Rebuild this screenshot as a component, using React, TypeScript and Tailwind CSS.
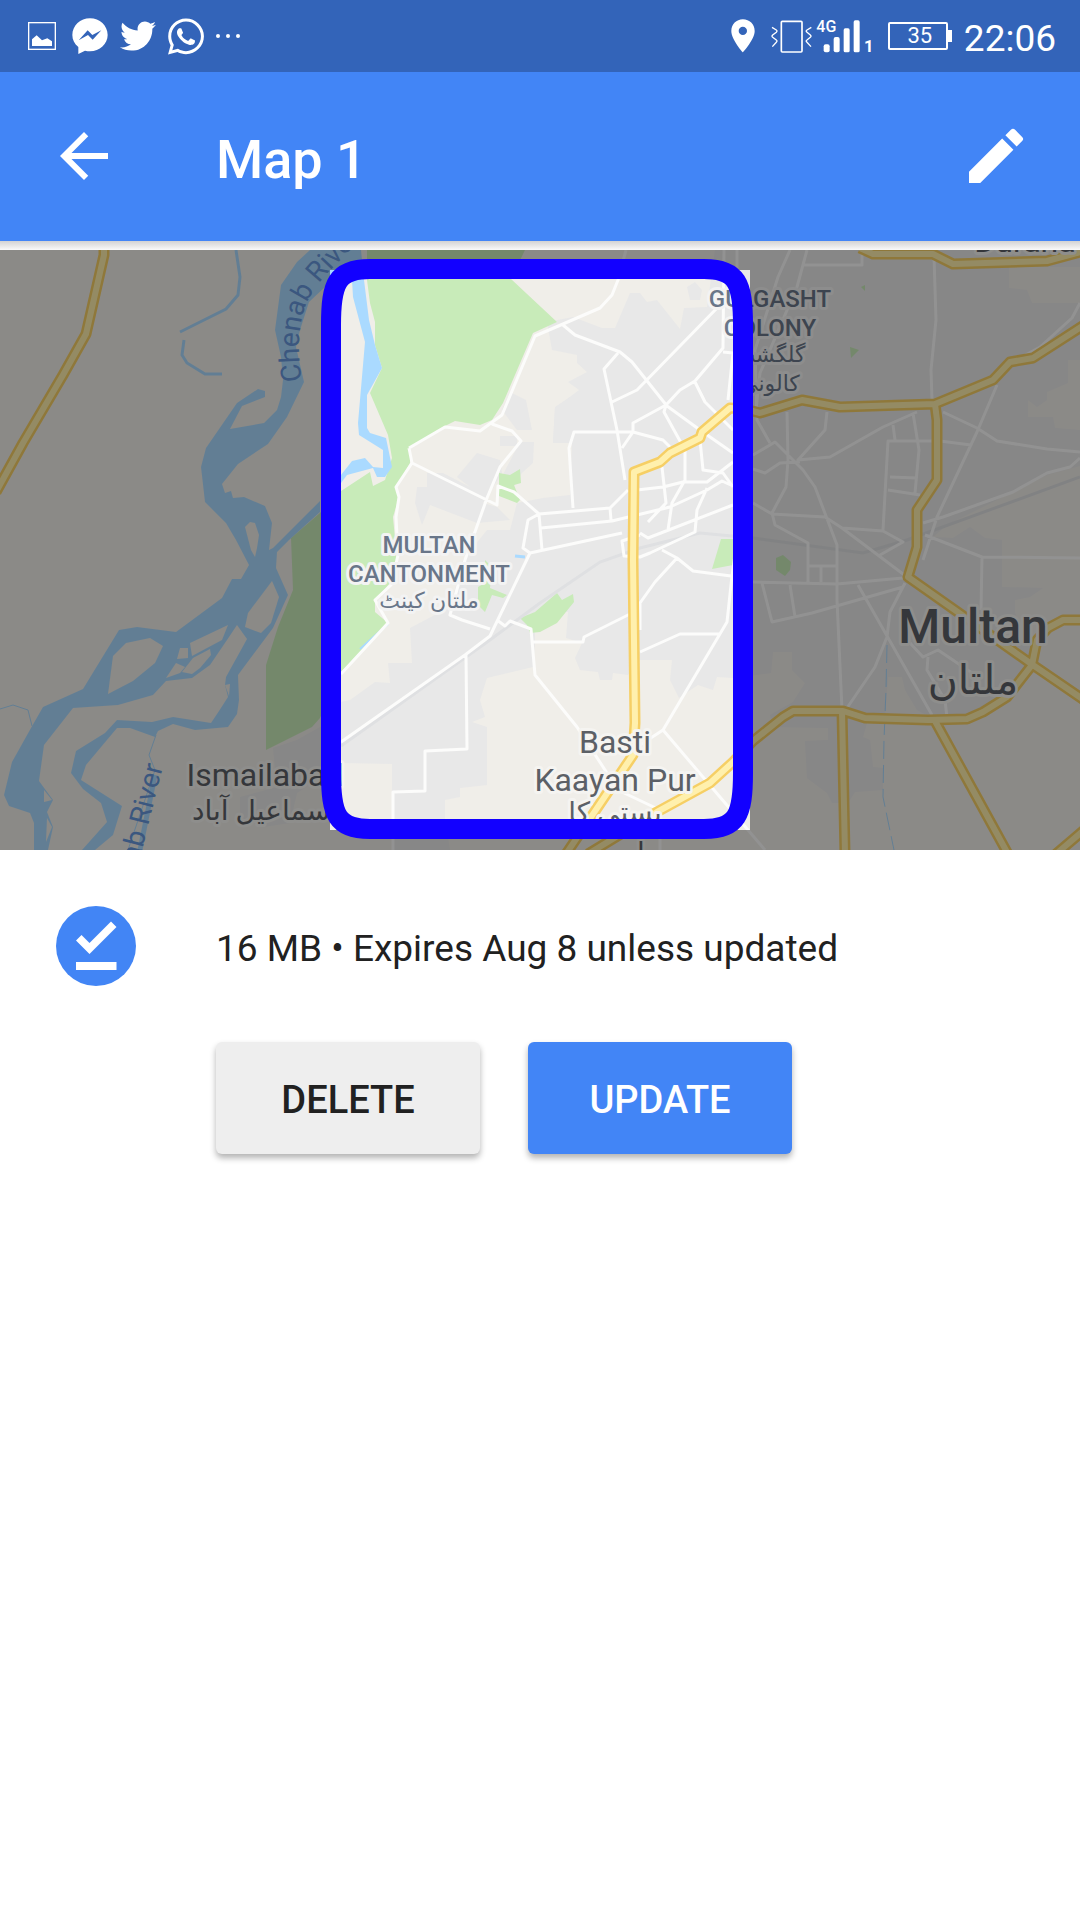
import { FaTwitter, FaWhatsapp } from "react-icons/fa";
import { MdArrowBack, MdEdit } from "react-icons/md";

const URBAN = [
  "547,322 573,317 602,328 615,328 630,293 640,293 647,302 657,300 680,329 684,308 707,307 715,250 1080,250 1080,267 1009,267 1009,288 1027,290 1032,303 1080,303 1080,360 1068,360 1068,383 1047,392 1047,400 1037,407 1028,400 1028,417 1053,417 1055,428 1080,430 1080,466 1047,475 947,525 933,537 953,538 970,527 985,538 1002,540 1002,587 1043,588 1030,597 1015,600 1015,613 1033,650 1033,663 1007,693 967,717 930,717 917,710 905,690 902,677 888,677 885,717 867,723 863,737 870,740 873,767 883,768 883,790 855,792 848,803 832,803 827,793 807,778 805,741 828,740 828,728 773,727 770,715 793,702 805,683 792,670 792,652 773,652 771,673 733,678 717,677 713,690 698,685 679,698 670,680 672,660 640,660 628,675 613,673 612,680 600,680 598,672 580,670 575,658 582,643 566,638 568,612 535,612 535,643 533,667 487,678 480,700 485,717 472,722 487,727 487,785 460,788 460,797 445,800 445,818 450,850 392,850 392,764 341,763 341,702 350,700 375,682 390,683 388,663 412,663 410,628 450,607 463,560 487,530 510,530 517,503 543,498 570,495 572,443 553,442 555,408 579,390 568,382 587,372 577,363 577,355 552,350",
  "510,392 526,400 532,430 517,430 502,410",
  "500,436 517,436 517,446 500,446",
  "555,407 570,397 570,443 553,443",
  "520,442 534,442 533,463 522,473 512,490 500,480",
  "477,453 500,460 502,473 483,503 497,507 510,520 477,523 443,510 430,505 422,525 415,503 417,487 427,487 427,473 443,473 470,487 457,477",
  "687,287 695,282 702,290 700,300 690,300",
  "273,748 297,740 320,727 341,720 341,765 297,793 290,823 263,827 240,817 240,797 277,787",
];

const PARKS = [
  "367,250 525,250 511,279 557,322 533,333 503,403 492,420 480,425 455,421 443,427 410,447 410,463 396,487 399,497 393,517 397,560 390,583 375,600 375,612 388,623 341,672 320,718 312,727 266,750 266,665 278,627 293,590 291,538 320,513 341,491 370,472 373,486 385,480 392,458 388,435 370,393 382,368 375,345 375,322 370,303 367,280",
  "499,473 510,475 520,469 521,483 514,485 520,500 517,503 499,496",
  "485,560 492,567 490,588 507,595 503,598 492,595 485,612 478,605 478,587 485,583",
  "520,618 535,612 557,593 562,600 573,594 574,602 557,623 540,632 530,633 527,625",
  "721,539 733,539 733,565 712,569",
  "850,347 859,350 851,358",
  "861,287 865,285 865,291",
  "776,558 783,555 791,562 790,570 785,576 776,570",
];

const RIVER =
  "361,250 310,250 297,262 281,285 275,330 281,357 283,380 281,397 277,410 264,423 230,429 242,406 265,397 265,391 258,389 237,403 206,448 201,467 205,502 226,523 236,540 249,565 241,579 232,579 222,598 176,632 137,627 119,630 83,689 43,707 31,728 12,762 4,795 9,806 30,813 34,823 34,850 48,850 53,827 47,812 53,800 39,781 44,745 73,708 118,705 153,695 166,681 192,678 210,665 227,640 237,625 247,639 226,677 225,685 228,697 219,711 211,723 173,717 152,722 117,720 105,733 76,751 71,773 83,789 101,803 107,822 82,850 95,850 113,835 122,806 81,780 86,765 117,728 130,728 155,737 158,731 173,724 195,730 228,727 237,714 239,700 238,675 273,628 288,595 276,568 277,552 289,540 320,512 320,501 273,548 269,550 272,523 265,506 244,497 233,498 231,491 225,493 222,484 238,464 268,444 287,417 304,382 296,347 300,330 309,302 325,287 340,276 352,280 353,297 365,342 358,423 359,435 383,450 383,468 373,467 365,458 352,461 341,475 341,483 347,475 373,468 377,477 385,477 392,467 386,438 370,433 367,428 367,395 382,368 375,345 369,320 364,280";

const ISLANDS = [
  "272,581 279,597 271,623 261,633 245,627 248,613",
  "245,527 250,522 255,523 259,535 257,548 255,557 251,550",
  "113,656 126,643 150,638 163,646 155,663 133,681 108,694",
  "190,643 228,625 222,640 192,656",
  "180,648 188,648 188,658 177,659",
  "176,663 185,667 180,673 166,678",
  "182,672 193,658 210,649 211,655 200,668 192,674",
  "225,685 230,684 229,696",
  "44,790 52,800 44,802",
  "47,818 52,827 46,842",
];

const STREETS =
  "M409 448L445 427 480 431 502 415 535 336 563 324 600 308 612 295 618 280 626 250" +
  "M409 448L412 463 396 487 399 497 396 517 398 555 391 585 375 600 388 623 341 674" +
  "M412 463L497 505 498 486 514 492 539 514 575 511 610 508 628 490" +
  "M492 424L512 431 521 441 500 467 487 498 465 560 450 615 462 620 490 629" +
  "M539 514L542 550M539 514L528 520 523 548 530 553M541 528L612 521 670 507 707 490 722 481 733 486" +
  "M530 553L622 533M530 553L490 636 465 655 341 742M466 655L467 749 425 751 425 791 393 792 393 852" +
  "M497 620L505 626 510 621 531 629 535 675 577 727 607 773 622 792 660 810 660 852" +
  "M533 642L583 642 584 637 632 613M563 325L575 335 620 352 632 362 667 406 700 430 733 453" +
  "M720 305L637 390 612 402M618 353L604 369 617 430 625 480M573 508L569 448 574 432 633 432 663 440 673 450" +
  "M633 432L633 423 666 405 680 390 695 381 723 348 724 250M737 250L737 290M695 382L705 402 733 430" +
  "M666 405L664 412 685 450 685 480 672 503 668 530M700 440L703 470 723 473 733 487" +
  "M733 462L707 482 683 482 663 487 637 490M662 467L666 503 648 522M633 432L622 448M610 508L611 520" +
  "M640 533L648 538 733 505M707 488L697 510 695 532 650 553 640 557 624 556 622 541 640 535" +
  "M662 550L677 558 655 582 640 603 640 630M677 558L693 571 731 576" +
  "M735 555L732 576 727 622 663 730 640 745M640 652L680 634 720 634M663 730L765 850M723 352L733 353 728 400" +
  "M790 250L778 277 755 350 757 420 770 443M807 250L797 287 760 373 756 410M803 265L862 265 862 250" +
  "M934 257L936 320 931 370 932 400M1080 303L1072 318 1040 347 1020 358" +
  "M787 412L788 460 786 487 772 513 775 525 808 543 808 582M827 412L825 430 798 460 830 457 883 427 917 412" +
  "M753 455L775 442 803 470 815 487 837 545 837 600 842 710M753 469L765 473 780 463 800 462" +
  "M753 503L772 514 825 517 842 528 883 531 903 542 880 555M842 528L907 577M883 530L888 441 940 441 971 445" +
  "M890 477L917 478M888 490L920 495M913 413L919 450 915 493M893 425L895 440" +
  "M943 412L977 428 997 441 1047 449 1080 452M997 385L977 432 937 517 923 560" +
  "M905 583L890 612 887 637 875 667 847 708M923 523L943 517 1013 492 1047 473 1070 467 1080 458" +
  "M925 535L982 557 1080 558M982 557L981 610M753 582L837 584 903 578M762 583L772 622 812 613 903 587" +
  "M790 585L795 617M808 566L837 566M821 566L821 582M858 585L932 715" +
  "M910 643L923 657 938 650 975 675M928 657L927 670 945 700 947 718";

const HIGHWAYS =
  "M104 248L104 255 86 334 63 375 23 443 -4 492" +
  "M1084 325L1033 358 1010 362 993 380 935 404 840 407 802 400 760 413 745 409 730 408 702 432 700 438 670 453 660 462 634 472 633 560 635 723 633 755 566 854" +
  "M935 404L937 420 937 480 917 510 917 547 908 577 1030 663 1084 700" +
  "M860 248L873 254 933 254 953 264 1047 261 1084 251" +
  "M588 854L657 812 710 783 733 762 753 741 783 717 793 711 843 711 865 718 928 720 967 719 983 712 1007 697 1032 665 1037 640 1048 628 1063 620 1084 620" +
  "M842 711L845 854M935 721L1008 854M1056 854L1084 830";

const FRAME =
  "M331 340V325C331 283 337 269 370 269H704C737 269 743 283 743 325V773C743 815 737 829 704 829H370C337 829 331 815 331 773Z";

const TOWN = "fill-[#5c6066] stroke-[#f5f4f1]";
const DISTRICT = "fill-[#697689] stroke-[#f3f3f3] font-medium";

function Polygons({ items, className }: { items: string[]; className: string }) {
  return (
    <g className={className}>
      {items.map((points) => (
        <polygon key={points} points={points} />
      ))}
    </g>
  );
}

function OfflineMap() {
  return (
    <svg
      viewBox="0 250 1080 600"
      className="block h-auto w-full bg-[#f0eeea]"
      role="img"
      aria-label="Offline map area around Multan"
    >
      <rect x="0" y="250" width="1080" height="600" className="fill-[#f0eee9]" />
      <Polygons items={URBAN} className="fill-[#e8e8e8]" />
      <Polygons items={PARKS} className="fill-[#c8ebb9]" />
      <polygon points={RIVER} className="fill-[#aadaff]" />
      <Polygons items={ISLANDS} className="fill-[#f0eee9]" />
      <g fill="none" className="stroke-[#aadaff]">
        <path
          d="M236 250L240 277 238 295 226 309 200 322 180 332M184 340L182 355 187 363 205 374 222 374"
          strokeWidth="3"
        />
        <path d="M0 709L13 705 28 710 32 726M156 735L149 755 155 770 128 850" strokeWidth="1" />
        <path d="M140 850L155 775" strokeWidth="5" />
        <path d="M887 645L886 690 884 740 883 797 894 850" strokeWidth="1" strokeDasharray="18 6" />
        <path d="M360 649L388 624" strokeWidth="2" />
        <path d="M515 556L525 557" strokeWidth="3" />
      </g>
      <path
        d="M341 746L490 640 540 603 600 562 640 548 700 533 753 538 863 553 907 540 1080 477"
        fill="none"
        strokeWidth="3"
        className="stroke-[#dfe0e2]"
      />
      <path d={STREETS} fill="none" strokeWidth="3" strokeLinejoin="round" className="stroke-[#fcfcfb]" />
      <path d={HIGHWAYS} fill="none" strokeWidth="11" strokeLinejoin="round" className="stroke-[#f6cf65]" />
      <path d={HIGHWAYS} fill="none" strokeWidth="6" strokeLinejoin="round" className="stroke-[#fff0ad]" />

      <g
        textAnchor="middle"
        strokeWidth="6"
        strokeLinejoin="round"
        paintOrder="stroke"
        className="font-['Roboto','Noto_Sans','DejaVu_Sans',sans-serif]"
      >
        <g fontSize="24" className={DISTRICT}>
          <text x="429" y="553">MULTAN</text>
          <text x="429" y="582">CANTONMENT</text>
          <text x="429" y="608" fontSize="22">ملتان کینٹ</text>
          <text x="770" y="307">GULGASHT</text>
          <text x="770" y="336">COLONY</text>
          <text x="770" y="362" fontSize="22">گلگشت</text>
          <text x="770" y="391" fontSize="22">کالونی</text>
        </g>
        <g fontSize="32" className={TOWN}>
          <text x="615" y="753">Basti</text>
          <text x="615" y="791">Kaayan Pur</text>
          <text x="615" y="822" fontSize="28">بستی کا</text>
          <text x="641" y="862" fontSize="28">ا</text>
          <text x="265" y="786">Ismailabad</text>
          <text x="265" y="820" fontSize="28">اسماعیل آباد</text>
          <text x="1025" y="252">Durana</text>
        </g>
        <g className={TOWN}>
          <text x="973" y="643" fontSize="48" className="font-medium">Multan</text>
          <text x="973" y="694" fontSize="41">ملتان</text>
        </g>
      </g>

      <g fontSize="28" className="fill-[#6696db] font-['Roboto',sans-serif]">
        <path id="river-course" d="M302 381C297 352 298 325 306 305C313 287 330 270 356 244" fill="none" />
        <text>
          <textPath href="#river-course">Chenab River</textPath>
        </text>
        <text transform="translate(163 766) rotate(-76)" textAnchor="end">Chenab River</text>
      </g>

      <path
        d="M0 250H1080V850H0ZM330 270V830H750V270Z"
        fillRule="evenodd"
        className="fill-black/42"
      />
      <path d={FRAME} fill="none" strokeWidth="20" className="stroke-[#1200ff]" />
    </svg>
  );
}

function PictureIcon() {
  return (
    <svg viewBox="84 66 84 84" className="size-7" aria-hidden="true">
      <rect x="86" y="68" width="80" height="80" fill="none" stroke="currentColor" strokeWidth="4" />
      <path fill="currentColor" d="M96 138V118L110 106 126 121 142 115 156 124V138Z" />
    </svg>
  );
}

function MessengerIcon() {
  return (
    <svg viewBox="215 56 108 108" className="size-9" aria-hidden="true">
      <path
        fill="currentColor"
        fillRule="evenodd"
        d="M269 57C298 57 322 79 322 107C322 134 298 156 269 156C264 156 259 155 254 154L234 164V143C222 134 216 121 216 107C216 79 240 57 269 57ZM235 123L263 107 277 121 303 93 276 107 262 93Z"
      />
    </svg>
  );
}

function PinIcon() {
  return (
    <svg viewBox="26 54 75 106" className="h-9 w-6" aria-hidden="true">
      <path
        fill="currentColor"
        fillRule="evenodd"
        d="M63 55C43 55 27 71 27 91C27 118 63 158 63 158S100 118 100 91C100 71 84 55 63 55ZM63 78A13 13 0 1 1 63 104A13 13 0 1 1 63 78Z"
      />
    </svg>
  );
}

function VibrateIcon() {
  return (
    <svg viewBox="145 58 123 99" className="h-[33px] w-[41px]" aria-hidden="true">
      <g fill="none" stroke="currentColor">
        <rect x="176" y="62" width="62" height="92" rx="3" strokeWidth="5" />
        <path
          strokeWidth="4"
          d="M148 80L161 88Q165 91 161 95L150 103Q146 107 150 110L161 118Q165 121 161 125L149 138M266 80L253 88Q248 91 253 95L263 103Q267 107 263 110L253 118Q248 121 253 125L265 138"
        />
      </g>
    </svg>
  );
}

function SignalIcon() {
  return (
    <svg viewBox="283 56 168 102" className="h-[34px] w-14 overflow-visible" role="img" aria-label="4G signal">
      <g fill="currentColor">
        <rect x="306" y="132" width="18" height="24" rx="6" />
        <rect x="336" y="110" width="18" height="46" rx="6" />
        <rect x="366" y="84" width="18" height="72" rx="5" />
        <rect x="396" y="60" width="18" height="96" rx="5" />
        <text x="284" y="95" fontSize="48" className="font-['Roboto',sans-serif] font-medium">4G</text>
        <text x="427" y="156" fontSize="50" className="font-['Roboto',sans-serif] font-bold">1</text>
      </g>
    </svg>
  );
}

function Battery() {
  return (
    <div className="flex items-center">
      <div className="flex h-7 w-15 items-center justify-center rounded-xs border-2 border-white pl-1 text-[22px] leading-none">
        35
      </div>
      <div className="h-3 w-1 bg-white" />
    </div>
  );
}

function StatusBar() {
  return (
    <div className="flex h-18 items-center justify-between bg-[#3364b9] pr-6 pl-7 text-white">
      <div className="flex items-center gap-3">
        <PictureIcon />
        <div className="flex items-center gap-3 pl-1">
          <MessengerIcon />
          <FaTwitter className="size-9" />
          <FaWhatsapp className="h-[41px] w-9" />
        </div>
        <div className="flex gap-1.5">
          <span className="size-1 rounded-full bg-white" />
          <span className="size-1 rounded-full bg-white" />
          <span className="size-1 rounded-full bg-white" />
        </div>
      </div>
      <div className="flex items-center">
        <PinIcon />
        <div className="flex items-center gap-1 pl-4">
          <VibrateIcon />
          <SignalIcon />
        </div>
        <div className="flex items-center gap-3 pl-4">
          <Battery />
          <span className="pt-1 text-[37px] leading-none">22:06</span>
        </div>
      </div>
    </div>
  );
}

function OfflineReadyIcon() {
  return (
    <svg viewBox="0 0 80 80" className="size-20 shrink-0" aria-hidden="true">
      <circle cx="40" cy="40" r="40" className="fill-[#4285f5]" />
      <path fill="#fff" d="M55 15.5L60.500 21 33.500 48 20 34.500 25.500 29 33.500 37ZM20 56H60.500V64H20Z" />
    </svg>
  );
}

export default function App() {
  return (
    <div className="min-h-screen bg-white font-['Roboto',sans-serif] text-[#212121]">
      <StatusBar />
      <header className="flex h-[169px] items-center bg-[#4285f6] px-12 pb-0.5 text-white">
        <button type="button" aria-label="Back" className="shrink-0">
          <MdArrowBack className="size-18" />
        </button>
        <h1 className="flex-1 pt-2 pl-24 text-[54px] leading-none font-medium">Map 1</h1>
        <button type="button" aria-label="Rename map" className="shrink-0">
          <MdEdit className="size-18" />
        </button>
      </header>
      <div className="h-[9px] bg-linear-to-b from-[#d3d3d3] to-[#fafafa]" />
      <main>
        <OfflineMap />
        <section className="pt-14">
          <div className="flex items-center gap-20 pl-14">
            <OfflineReadyIcon />
            <p className="pt-1 text-[37px] leading-none">16 MB • Expires Aug 8 unless updated</p>
          </div>
          <div className="mt-14 flex gap-12 pl-54 text-[38px] leading-none font-medium">
            <button
              type="button"
              className="h-28 w-66 rounded-md bg-[#eeeeee] pt-1 shadow-[0_4px_6px_rgba(0,0,0,0.3)]"
            >
              DELETE
            </button>
            <button
              type="button"
              className="h-28 w-66 rounded-md bg-[#4285f6] pt-1 text-white shadow-[0_4px_6px_rgba(0,0,0,0.3)]"
            >
              UPDATE
            </button>
          </div>
        </section>
      </main>
    </div>
  );
}
